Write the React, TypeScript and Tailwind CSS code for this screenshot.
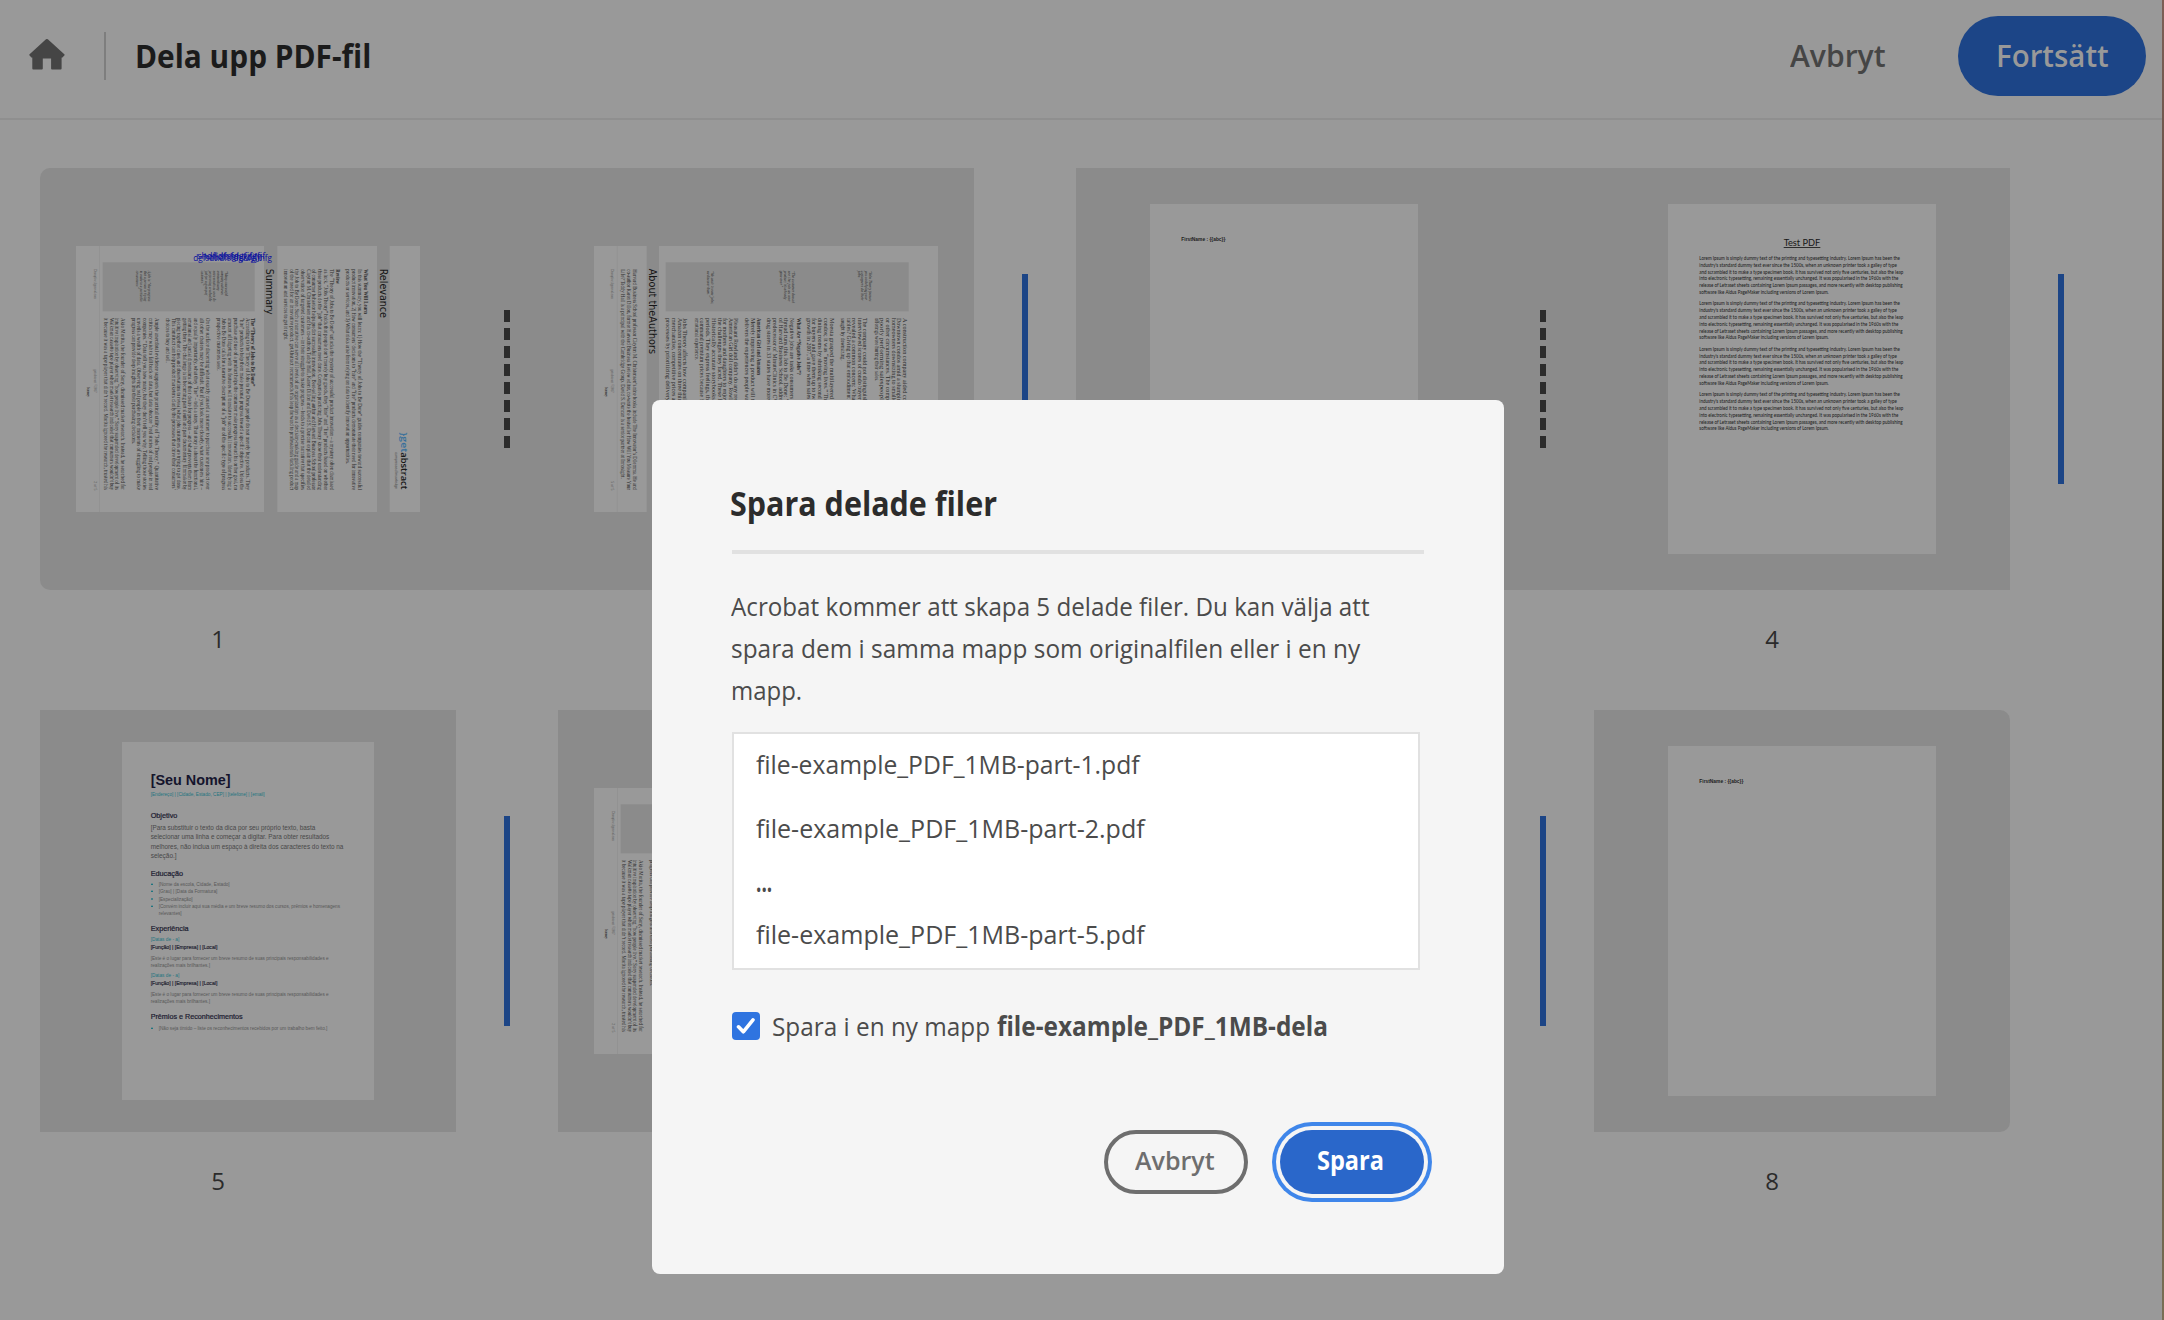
import React, { useLayoutEffect, useRef, useState } from "react";

/** Single line of text, condensed or expanded to an exact advance width. */
function Fit({ w, children, className = "" }: { w: number; children: React.ReactNode; className?: string }) {
  const ref = useRef<HTMLSpanElement>(null);
  const [k, setK] = useState(1);
  useLayoutEffect(() => {
    if (ref.current) setK(w / ref.current.offsetWidth);
  }, [w]);
  return (
    <span className={`inline-block whitespace-nowrap text-left ${className}`} style={{ width: w }}>
      <span ref={ref} className="inline-block origin-left" style={{ transform: `scaleX(${k})` }}>
        {children}
      </span>
    </span>
  );
}

type Line = [x: number, y: number, len: number, text: string];

function VLines({ lines, size = 17.5, fill = "#2c2c2c", family = "Liberation Serif, serif", weight = 400, italic = false }: {
  lines: Line[]; size?: number; fill?: string; family?: string; weight?: number; italic?: boolean;
}) {
  return (
    <g fill={fill} fontSize={size} fontFamily={family} fontWeight={weight} fontStyle={italic ? "italic" : "normal"}>
      {lines.map(([x, y, len, t], i) => (
        <text key={i} transform={`translate(${x} ${y}) rotate(90)`} textLength={len} lengthAdjust="spacingAndGlyphs">{t}</text>
      ))}
    </g>
  );
}

function HLines({ lines, size, fill = "#303030", family = "Liberation Sans, sans-serif", weight = 400 }: {
  lines: Line[]; size: number; fill?: string; family?: string; weight?: number;
}) {
  return (
    <g fill={fill} fontSize={size} fontFamily={family} fontWeight={weight}>
      {lines.map(([x, y, len, t], i) => (
        <text key={i} x={x} y={y} textLength={len} lengthAdjust="spacingAndGlyphs">{t}</text>
      ))}
    </g>
  );
}

const summaryBody: Line[] = [
  [557, 264, 516, "According to the Theory of Jobs to Be Done, people do not merely buy products. They"],
  [539, 264, 516, "“hire” products to help them make personal progress toward a specific objective. Unless the"],
  [521, 264, 516, "purchase and use of a product helps the consumer make progress toward his or her goal, no"],
  [504, 264, 516, "amount of fidgeting with its features will translate to successful innovation. Identifying a"],
  [486, 264, 516, "Job to Be Done calls for a narrative description of a “job” or of the specific type of progress"],
  [470, 264, 158, "prospective customers seek."],
  [438, 264, 516, "On the surface discerning what exactly caused a customer to purchase one product over"],
  [420, 264, 516, "all other choices may be difficult. But if you look more closely, what customers hire –"],
  [403, 264, 516, "and equally importantly, what they “fire” – tells a story. That story is about the functional,"],
  [385, 264, 516, "emotional and social dimensions of their desire for progress – and what prevents them from"],
  [368, 264, 516, "getting there. The challenge is in becoming part sleuth and part documentary filmmaker by"],
  [351, 264, 516, "piecing together clues and observations to reveal what jobs customers are trying to get done."],
  [335, 264, 516, "This construct can help product marketers clarify the processes that drive their consumers’"],
  [318, 264, 134, "choices to buy and sell."],
  [284, 264, 516, "Ample anecdotal evidence supports the practical utility of “Jobs Theory.” Quantitative"],
  [267, 264, 516, "critics may wish to fall back on data, but data obscure “real stories of real people in real"],
  [249, 264, 516, "companies.” Data tell you how many, but they don’t tell you why. Telling those stories"],
  [232, 264, 516, "unveils a wealth of data. Observing real people in their moments of struggling to make"],
  [215, 264, 378, "progress can provide deep insights into their purchasing decisions."],
  [184, 264, 516, "Akio Morita, the founder of Sony, dismissed market research. Instead, he searched for"],
  [166, 264, 516, "intuitive inspiration by observing “how people live.” Sony suspended development of its"],
  [149, 264, 516, "Walkman cassette tape player when market research indicated that consumers wouldn’t buy"],
  [132, 264, 516, "it because it was a tape player that didn’t record. Morita ignored the research, trusted his"],
];

const relevanceBody: Line[] = [
  [895, 118, 662, "In this summary, you will learn: 1) How the “Theory of Jobs to Be Done” guides companies toward successful"],
  [876, 118, 662, "product innovation, 2) How consumers’ decisions to “hire” and “fire” products demonstrate their need for innovative"],
  [858, 118, 584, "products or services, and 3) What risks arise from relying on data to identify innovation opportunities."],
  [810, 118, 662, "The “Theory of Jobs to Be Done” unlocks the mystery of successful product innovation – a mystery often dismissed"],
  [792, 118, 662, "as luck. “Jobs Theory” holds that people don’t merely buy goods, they “hire” and “fire” products based on whether"],
  [774, 118, 662, "those products do the “job” that consumers need done. Companies practicing Jobs Theory know their understanding"],
  [757, 118, 662, "of consumer behavior helps predict successful innovation. Best-selling author and Harvard Business School professor"],
  [740, 118, 662, "Clayton M. Christensen and his co-authors Taddy Hall, Karen Dillon and David S. Duncan explain that the detailed"],
  [723, 118, 662, "observation of targeted customers – in their struggle to make progress – leads to a precise narrative that specifies"],
  [706, 118, 662, "the Job to Be Done. Such a narrative can serve all levels of an organization as a decision-making guide and a map"],
  [689, 118, 662, "of the need for an innovative product. getAbstract recommends this leap forward to professionals tackling product"],
  [672, 118, 212, "innovation and services to get it right."],
];

function Footer({ dx = 0, page }: { dx?: number; page: string }) {
  return (
    <g transform={`translate(${dx} 0)`}>
      <rect x="117" y="48" width="3" height="798" fill="#929292" />
      <VLines size={11} fill="#555" lines={[[101, 118, 88, "Disruptive Approval.com"], [101, 418, 70, "getabstract ©2017"], [101, 754, 27, page]]} />
      <VLines size={10} fill="#222" weight={700} lines={[[81, 472, 28, "Summary"]]} />
    </g>
  );
}

function SummaryPage({ scribble = false }: { scribble?: boolean }) {
  return (
    <svg viewBox="48 48 1032 798" className="block h-[266px] w-[344px] shrink-0 bg-[#999999]">
      <rect x="128" y="97" width="456" height="147" fill="#8b8b8b" />
      <rect x="612" y="48" width="40" height="798" fill="#8b8b8b" />
      <rect x="951" y="48" width="38" height="798" fill="#8b8b8b" />
      <Footer page="2 of 5" />
      <VLines lines={[[574, 264, 205, "The “Theory of Jobs to Be Done”"], [912, 118, 134, "What You Will Learn"], [827, 118, 44, "Review"]]} weight={700} />
      <VLines lines={summaryBody} />
      <VLines lines={relevanceBody} />
      <VLines
        size={11}
        italic
        lines={[
          [494, 122, 76, "“Many successful"], [482, 122, 72, "company achieves"], [470, 122, 60, "extraordinary"], [458, 122, 92, "extra results as once do"],
          [446, 122, 92, "performing a valuable"], [434, 122, 74, "job for a group of"], [423, 122, 44, "customers.”"],
          [263, 122, 92, "A job is “the progress"], [252, 122, 92, "that a person is trying"], [240, 122, 95, "to make in a particular"], [229, 122, 54, "circumstance.”"],
        ]}
      />
      <VLines size={29} family="DejaVu Sans Condensed, DejaVu Sans, sans-serif" fill="#161616" lines={[[619, 116, 138, "Summary"], [960, 116, 148, "Relevance"]]} />
      <VLines size={28} family="Open Sans, sans-serif" fill="#366f9b" weight={600} lines={[[1024, 607, 60, "}get"]]} />
      <VLines size={28} family="Open Sans, sans-serif" fill="#181818" weight={600} lines={[[1024, 667, 111, "abstract"]]} />
      <VLines size={10} family="Liberation Sans" fill="#444" lines={[[1006, 667, 110, "compressed knowledge"]]} />
      {scribble && (
        <g fill="#0a0f9e" fontFamily="Open Sans, sans-serif" fontSize="29">
          <text x="400" y="92" textLength="236" lengthAdjust="spacingAndGlyphs">dgfsdhdfsfdgbfgjfhfg</text>
          <text x="412" y="88" textLength="204" lengthAdjust="spacingAndGlyphs">shdfjdfsfdgfjfgfjf</text>
          <text x="432" y="90" textLength="170" lengthAdjust="spacingAndGlyphs">hofidfsfghjkdjfy</text>
        </g>
      )}
    </svg>
  );
}

function AuthorsPage() {
  const blocks: Line[] = [
    [1029, 264, 420, "A construction company aided consultants who aimed to"], [1012, 264, 420, "Downtown condos amid a slumping market in the city, the"], [995, 264, 420, "homeowners downsizing to smaller residences because of"],
    [978, 264, 420, "or other circumstances. The company asked for more info"], [961, 264, 350, "poorly performing salespeople, a possibly"], [945, 264, 190, "offerings were hurting their sales."],
    [910, 264, 420, "The company could not distinguish various needs as it was"], [893, 264, 420, "interviewed scores of condo buyers to determine what they"], [877, 264, 420, "revealed a common concern: What would become of their"], [860, 264, 420, "tables? Giving up that embodiment of family life, which was"], [843, 264, 128, "sought by downsizing."],
    [809, 264, 420, "Moesta grasped the multilayered Job to Be Done for this"], [792, 264, 420, "condos; it was “moving lives.” The company reacted soon"], [774, 264, 420, "dining rooms by shrinking second bedrooms, and also paid"], [757, 264, 420, "for buyers and gave them up to two years storage and such"], [740, 264, 420, "growth in 2007, a time when sales dropped off nationwide."],
    [690, 264, 420, "Negative jobs are tasks consumers would rather never do at"], [673, 264, 420, "thread runs this Job to Be Done: “I don’t want to see that"], [656, 264, 420, "of Harvard Business School, addressed this when founding"], [639, 264, 420, "predecessor of MinuteClinics in CVS drugstores; this brand"], [622, 264, 420, "drug stores in 33 states have more than 1,000 such clinics."],
    [573, 264, 420, "Merely improving a product will translate poorly unless it"], [556, 264, 420, "delivers the experiences people want when they hire things"],
    [523, 264, 420, "Pleasant Rowland didn’t do any research before making the"], [506, 264, 420, "American Girl doll company. Rowland envisioned a product"], [489, 264, 420, "for mothers and daughters to enjoy shared time discussing"], [473, 264, 420, "the challenges they faced. These high-quality dolls depict"], [456, 264, 420, "Historically accurate storybooks portray the dolls’ lives"], [438, 264, 420, "periods. They express feelings, their purchasers pay more"], [421, 264, 420, "command premium prices because buyers want that fulfilling"], [404, 264, 126, "emotional experience."],
    [370, 264, 420, "Jobs Theory affects how companies design processes like"], [353, 264, 420, "Amazon concentrates on three things that it knows matter:"], [335, 264, 420, "merchandise, competitive prices and rapid delivery; it has"], [318, 264, 420, "processes by prioritizing delivery times every single day"],
  ];
  return (
    <svg viewBox="102 48 1032 798" className="block h-[266px] w-[344px] shrink-0 bg-[#999999]">
      <rect x="260" y="48" width="37" height="798" fill="#8b8b8b" />
      <rect x="317" y="97" width="729" height="147" fill="#8b8b8b" />
      <Footer dx={53} page="5 of 5" />
      <VLines lines={blocks} />
      <VLines weight={700} lines={[[711, 264, 171, "What Are “Negative Jobs”?"], [591, 264, 171, "American Girl and Amazon"]]} />
      <VLines
        lines={[
          [219, 118, 662, "Harvard Business School professor Clayton M. Christensen’s nine books include The Innovator’s Dilemma. He and"],
          [201, 118, 662, "co-author Karen Dillon, former Harvard Business Review editor, co-wrote the bestseller How Will You Measure Your"],
          [184, 118, 628, "Life? Taddy Hall is a principal with the Cambridge Group. David S. Duncan is a senior partner at Innosight."],
        ]}
      />
      <VLines
        size={11}
        italic
        lines={[
          [926, 122, 92, "“Jobs Theory focuses"], [915, 122, 88, "you on helping your"], [904, 122, 90, "customers do their"], [893, 122, 30, "jobs.”"],
          [696, 122, 98, "“The customer doesn’t"], [684, 122, 92, "see the job as one"], [672, 122, 86, "product; it’s already"], [660, 122, 50, "gone over.”"],
          [453, 122, 100, "“We can’t ‘create’ jobs;"], [441, 122, 78, "we discover them.”"],
        ]}
      />
      <VLines size={29} family="DejaVu Sans Condensed, DejaVu Sans, sans-serif" fill="#161616" lines={[[268, 116, 256, "About theAuthors"]]} />
    </svg>
  );
}

function NamePage() {
  return (
    <svg viewBox="270 132 804 1050" className="block h-[350px] w-[268px] shrink-0 bg-[#999999]">
      <HLines size={15} fill="#1c1c1c" weight={700} lines={[[364, 242, 132, "FirstName : {{abc}}"]]} />
    </svg>
  );
}

const lorem: [number, string][] = [
  [602, "Lorem Ipsum is simply dummy text of the printing and typesetting industry. Lorem Ipsum has been the"],
  [593, "industry's standard dummy text ever since the 1500s, when an unknown printer took a galley of type"],
  [612, "and scrambled it to make a type specimen book. It has survived not only five centuries, but also the leap"],
  [597, "into electronic typesetting, remaining essentially unchanged. It was popularised in the 1960s with the"],
  [610, "release of Letraset sheets containing Lorem Ipsum passages, and more recently with desktop publishing"],
  [388, "software like Aldus PageMaker including versions of Lorem Ipsum."],
];

function LoremPage() {
  const lines: Line[] = [0, 1, 2, 3].flatMap((p) =>
    lorem.map(([len, t], i): Line => [178, 240 + p * 136.3 + i * 20.4, len, t]),
  );
  return (
    <svg viewBox="84 72 804 1050" className="block h-[350px] w-[268px] shrink-0 bg-[#999999]">
      <HLines size={28} family="Lato, sans-serif" fill="#161616" lines={[[431, 198, 110, "Test PDF"]]} />
      <rect x="431" y="201" width="110" height="2.5" fill="#161616" />
      <HLines size={14.5} family="Lato, sans-serif" fill="#242424" weight={500} lines={lines} />
    </svg>
  );
}

function ResumePage() {
  return (
    <svg viewBox="36 36 756 1074" className="block h-[358px] w-[252px] shrink-0 bg-[#999999]">
      <HLines size={46} weight={700} fill="#14142c" lines={[[122, 165, 240, "[Seu Nome]"]]} />
      <HLines size={15} fill="#1f7580" lines={[
        [122, 197, 342, "[Endereço] | [Cidade, Estado, CEP] | [telefone] | [email]"],
        [122, 634, 86, "[Datas de - a]"], [122, 742, 86, "[Datas de - a]"],
      ]} />
      <g stroke="#1b1b30" strokeWidth="0.6">
        <HLines size={21} fill="#1b1b30" lines={[[122, 264, 80, "Objetivo"], [122, 437, 97, "Educação"], [122, 603, 114, "Experiência"], [122, 868, 276, "Prêmios e Reconhecimentos"]]} />
      </g>
      <HLines size={19} fill="#484848" lines={[
        [122, 299, 494, "[Para substituir o texto da dica por seu próprio texto, basta"],
        [122, 328, 536, "selecionar uma linha e começar a digitar. Para obter resultados"],
        [122, 357, 578, "melhores, não inclua um espaço à direita dos caracteres do texto na"],
        [122, 385, 78, "seleção.]"],
      ]} />
      <HLines size={14.5} fill="#585858" lines={[
        [146, 468, 213, "[Nome da escola, Cidade, Estado]"],
        [146, 490, 176, "[Grau] | [Data da Formatura]"],
        [146, 512, 102, "[Especialização]"],
        [146, 533, 544, "[Convém incluir aqui sua média e um breve resumo dos cursos, prêmios e homenagens"],
        [146, 555, 69, "relevantes]"],
        [122, 690, 534, "[Este é o lugar para fornecer um breve resumo de suas principais responsabilidades e"],
        [122, 712, 178, "realizações mais brilhantes.]"],
        [122, 799, 534, "[Este é o lugar para fornecer um breve resumo de suas principais responsabilidades e"],
        [122, 820, 178, "realizações mais brilhantes.]"],
        [146, 900, 506, "[Não seja tímido – liste os reconhecimentos recebidos por um trabalho bem feito.]"],
      ]} />
      <g stroke="#222230" strokeWidth="0.5">
        <HLines size={15} fill="#222230" lines={[[122, 656, 200, "[Função] | [Empresa] | [Local]"], [122, 764, 200, "[Função] | [Empresa] | [Local]"]]} />
      </g>
      {[463, 484, 507, 529, 895].map((y) => <rect key={y} x="123" y={y - 2} width="6" height="4" fill="#1f7580" />)}
    </svg>
  );
}

function Tile({ n, children, className = "" }: { n: string; children?: React.ReactNode; className?: string }) {
  return (
    <div className="w-[416px] shrink-0">
      <div className={`flex h-[422px] items-center justify-center bg-[#8b8b8b] ${className}`}>{children}</div>
      <div className="w-[356px] pt-[29px] text-center text-[24px] font-medium leading-[40px] text-[#2b2b2b]">{n}</div>
    </div>
  );
}

function Join() {
  return (
    <div className="flex h-[422px] w-[102px] shrink-0 flex-col items-center gap-[6px] bg-[#8b8b8b] pt-[142px]">
      {Array.from({ length: 8 }, (_, i) => <div key={i} className="h-[12px] w-[6px] bg-[#2c2c2c]" />)}
    </div>
  );
}

function Cut() {
  return (
    <div className="flex h-[422px] w-[102px] shrink-0 justify-center pt-[106px]">
      <div className="h-[210px] w-[6px] bg-[#1c4586]" />
    </div>
  );
}

export default function App() {
  return (
    <div className="relative flex h-[1320px] w-[2164px] overflow-hidden bg-[#999999] font-['Open_Sans',sans-serif]">
      <div className="flex h-full w-[2162px] flex-col">
        <header className="flex h-[120px] shrink-0 items-start border-b-2 border-[#8f8f8f]">
          <svg viewBox="0 0 36 31" className="ml-[29px] mt-[39px] h-[31px] w-[36px] shrink-0" fill="#454545">
            <path d="M16.7.5.6 15.2a1 1 0 0 0 0 1.4l1.6 1.7c.3.3.7.4 1.1.3V29.5a.9.9 0 0 0 .9.9h8.700a.9.9 0 0 0 .9-.9V19.500h8.300v10a.9.9 0 0 0 .9.9h8.700a.9.9 0 0 0 .9-.9V18.600c.4.1.8 0 1.1-.3l1.600-1.700a1 1 0 0 0 0-1.400L19.100.5a1.800 1.800 0 0 0-2.400 0Z" />
          </svg>
          <div className="ml-[39px] mt-[32px] h-[48px] w-[2px] bg-[#7e7e7e]" />
          <h1 className="ml-[29px] mt-[36px] text-[32px] font-bold leading-[40px] text-[#1b1b1b]"><Fit w={236}>Dela upp PDF-fil</Fit></h1>
          <div className="ml-auto mt-[35px] text-[31px] font-semibold leading-[40px] text-[#454545]"><Fit w={96}>Avbryt</Fit></div>
          <button className="ml-[72px] mr-[16px] mt-[16px] flex h-[80px] w-[188px] items-start justify-center rounded-full bg-[#1c4587] pt-[19px] text-[31px] font-semibold leading-[40px] text-[#999999]">
            <Fit w={113}>Fortsätt</Fit>
          </button>
        </header>
        <main className="flex flex-col gap-[51px] pl-[40px] pt-[48px]">
          <div className="flex">
            <Tile n="1" className="rounded-l-[10px]"><SummaryPage scribble /></Tile>
            <Join />
            <Tile n="2"><AuthorsPage /></Tile>
            <Cut />
            <Tile n="3"><NamePage /></Tile>
            <Join />
            <Tile n="4"><LoremPage /></Tile>
            <Cut />
          </div>
          <div className="flex">
            <Tile n="5"><ResumePage /></Tile>
            <Cut />
            <Tile n="6"><SummaryPage /></Tile>
            <Join />
            <Tile n="7" />
            <Cut />
            <Tile n="8" className="rounded-r-[10px]"><NamePage /></Tile>
          </div>
        </main>
      </div>
      <div className="h-full w-[2px] bg-linear-to-b from-[#7d5f56] via-[#3f3a2a] to-[#7a6f55]" />

      <section role="dialog" className="absolute left-[652px] top-[400px] flex h-[874px] w-[852px] flex-col items-start rounded-[8px] bg-[#f5f5f5] px-[80px] text-[26px] font-medium leading-[42px] text-[#4b4b4b]">
        <h2 className="mt-[83px] text-[34px] font-bold leading-[40px] text-[#2c2c2c]"><Fit w={267} className="-ml-[2px]">Spara delade filer</Fit></h2>
        <div className="mt-[27px] h-[4px] w-full shrink-0 bg-[#e1e1e1]" />
        <p className="-ml-px mt-[31px] flex flex-col">
          <Fit w={639}>Acrobat kommer att skapa 5 delade filer. Du kan välja att</Fit>
          <Fit w={629}>spara dem i samma mapp som originalfilen eller i en ny</Fit>
          <Fit w={71}>mapp.</Fit>
        </p>
        <ul className="mt-[21px] flex h-[238px] w-[688px] shrink-0 flex-col border-2 border-[#e1e1e1] bg-white pl-[22px] pt-[9px]">
          <li className="h-[64px]"><Fit w={384}>file-example_PDF_1MB-part-1.pdf</Fit></li>
          <li className="h-[54px]"><Fit w={389}>file-example_PDF_1MB-part-2.pdf</Fit></li>
          <li className="h-[52px] font-bold"><Fit w={16}>...</Fit></li>
          <li><Fit w={389}>file-example_PDF_1MB-part-5.pdf</Fit></li>
        </ul>
        <label className="mt-[35px] flex items-start">
          <span className="mt-[7px] flex h-[28px] w-[28px] items-center justify-center rounded-[4px] bg-[#2f74e0]">
            <svg viewBox="0 0 20 20" className="h-[20px] w-[20px]" fill="none" stroke="#fff" strokeWidth="3.6" strokeLinecap="round" strokeLinejoin="round"><path d="M2.500 10.800 7.300 15.800 17 3.800" /></svg>
          </span>
          <Fit w={218} className="ml-[12px]">Spara i en ny mapp</Fit>
          <Fit w={331} className="ml-[7px] font-bold">file-example_PDF_1MB-dela</Fit>
        </label>
        <div className="mt-[83px] flex w-full justify-end gap-[32px] font-semibold">
          <button className="flex h-[64px] w-[144px] items-start justify-center rounded-full border-4 border-[#6e6e6e] pr-[2px] pt-[5px] text-[#6e6e6e]"><Fit w={80}>Avbryt</Fit></button>
          <button className="flex h-[64px] w-[144px] items-start justify-center rounded-full bg-[#2a67ca] pr-[3px] pt-[9px] font-bold text-white ring-4 ring-[#3f86ea] ring-offset-4 ring-offset-[#f5f5f5]"><Fit w={67}>Spara</Fit></button>
        </div>
      </section>
    </div>
  );
}
